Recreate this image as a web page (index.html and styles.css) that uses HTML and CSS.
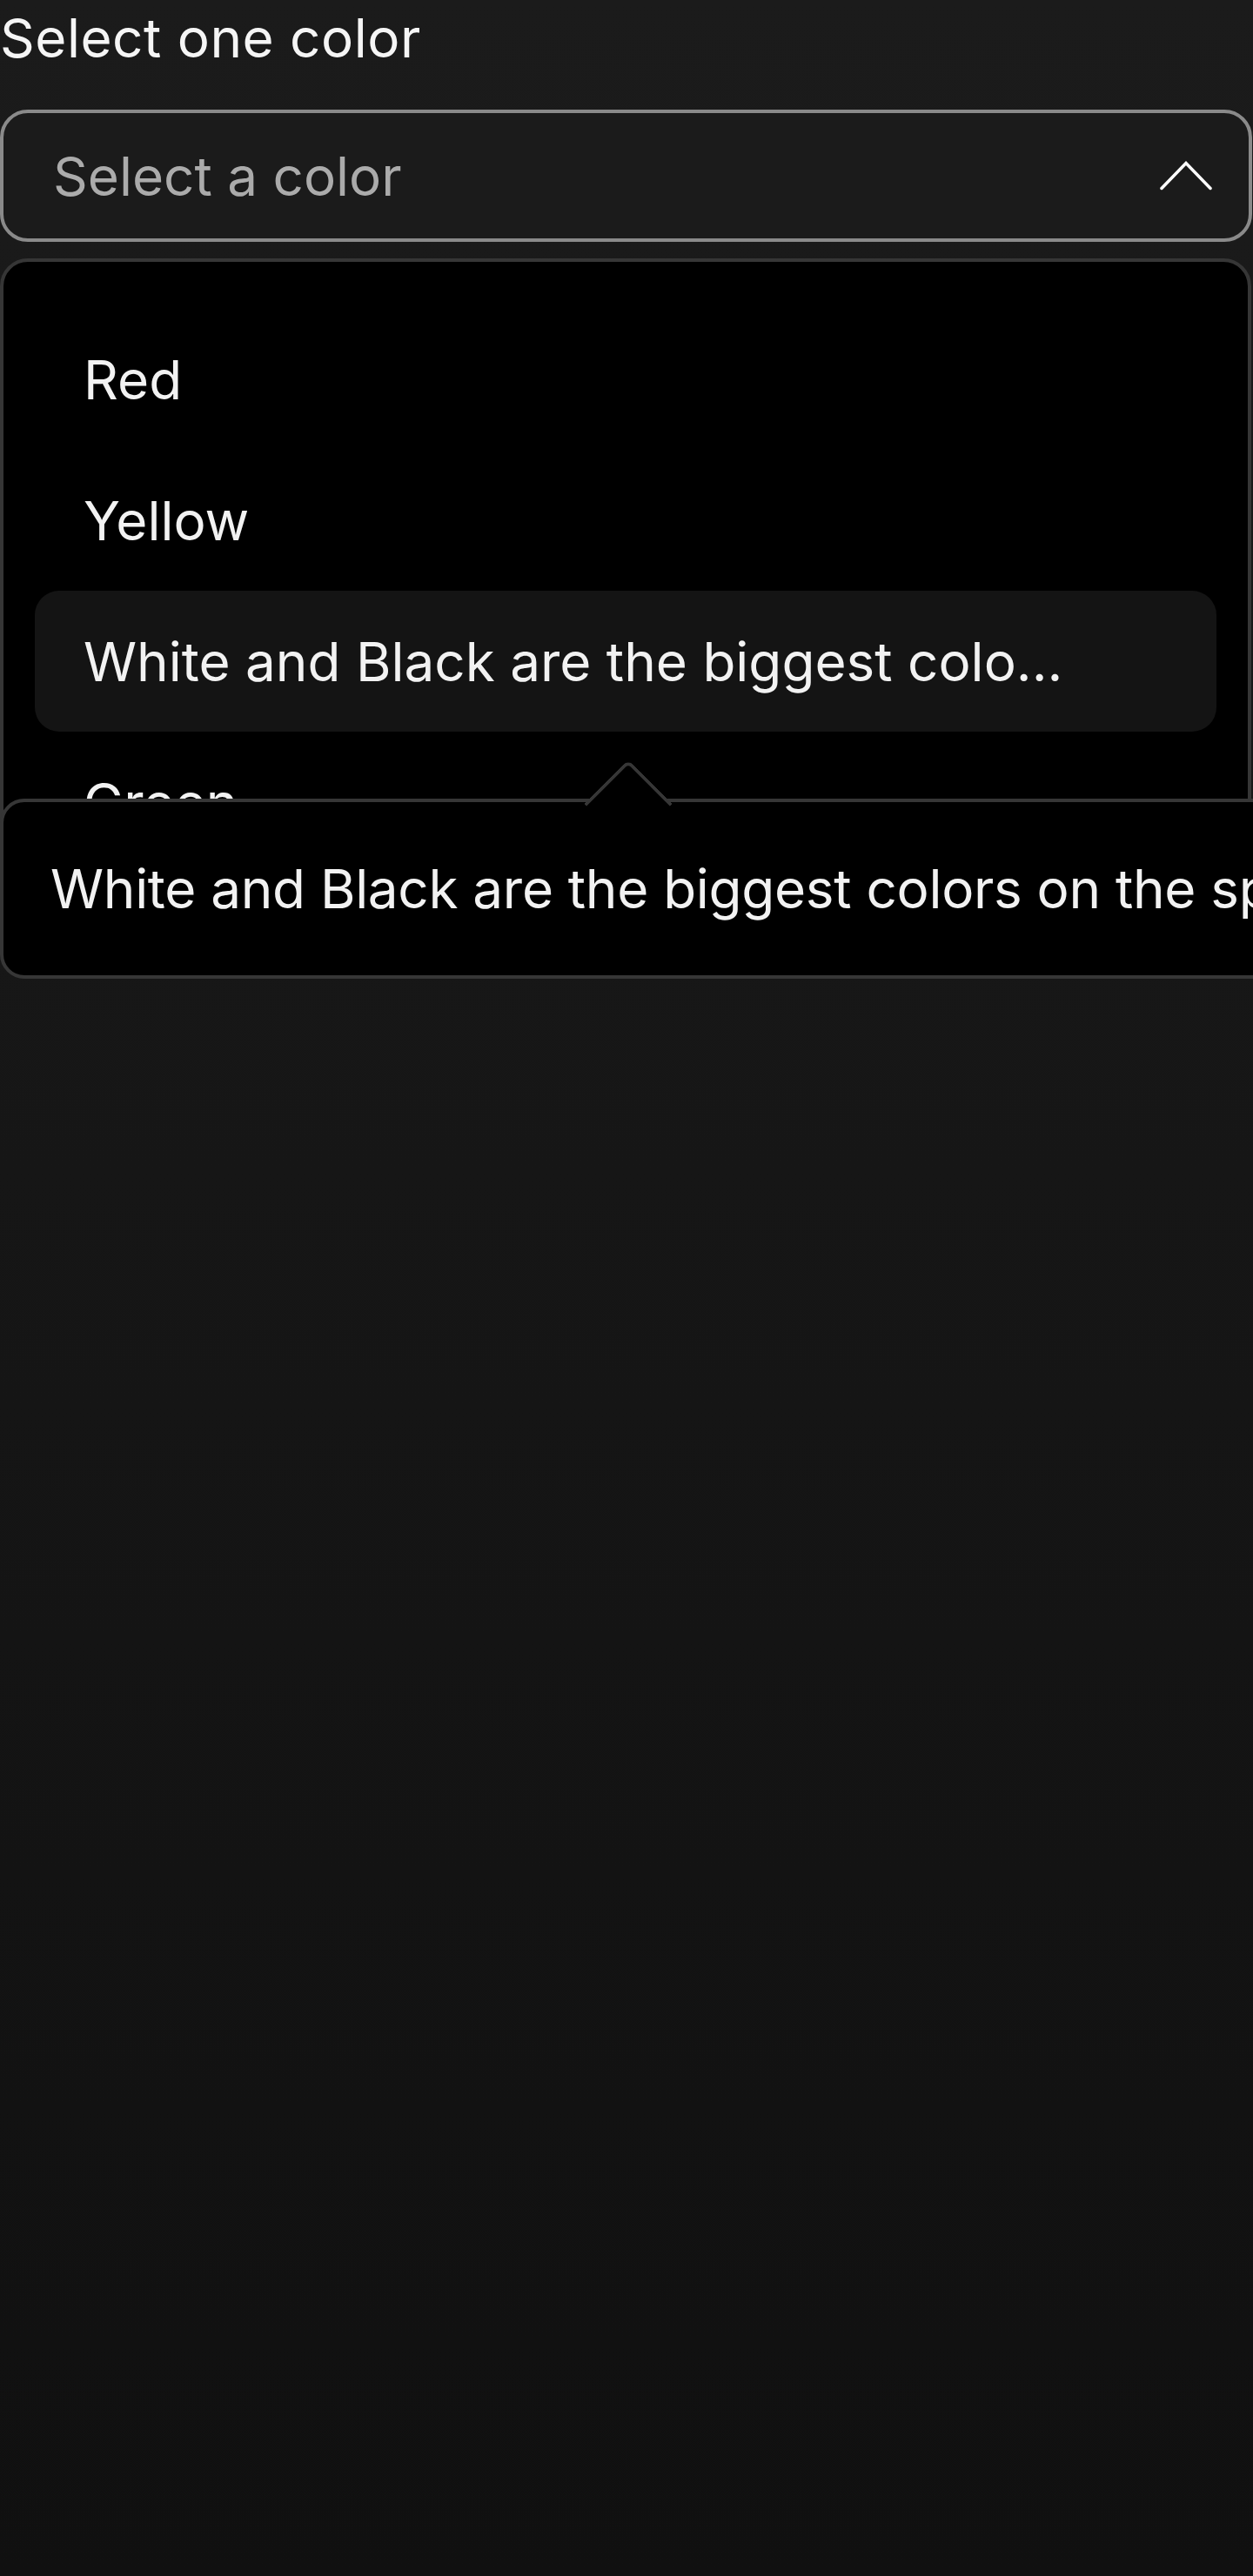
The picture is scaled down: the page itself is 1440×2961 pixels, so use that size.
FILE: index.html
```html
<!DOCTYPE html>
<html lang="en">
<head>
<meta charset="utf-8">
<title>Select one color</title>
<link rel="stylesheet" href="styles.css">
</head>
<body>
<div class="field">
  <label class="label">Select one color</label>
  <div class="select">
    <span class="placeholder">Select a color</span>
    <svg class="chevron" width="60" height="34" viewBox="0 0 60 34" aria-hidden="true">
      <polyline points="2,31.5 30,2.5 58,31.5" fill="none" stroke="#ffffff" stroke-width="3.5" stroke-linecap="round" stroke-linejoin="miter"/>
    </svg>
  </div>
  <ul class="list">
    <li class="item">Red</li>
    <li class="item">Yellow</li>
    <li class="item item-active">White and Black are the biggest colo...</li>
    <li class="item">Green</li>
    <li class="item">Blue</li>
  </ul>
  <div class="tooltip">White and Black are the biggest colors on the spectrum</div>
</div>
</body>
</html>
```

FILE: styles.css
```css
html, body {
  margin: 0;
  padding: 0;
  overflow-x: hidden;
}

body {
  min-height: 2961px;
  background: linear-gradient(#1b1b1b, #101010);
  font-family: Inter, "Noto Sans", "Liberation Sans", sans-serif;
  color: #f2f2f2;
}

.field {
  position: relative;
  display: flex;
  flex-direction: column;
}

.label {
  display: block;
  font-size: 62px;
  line-height: 88px;
  letter-spacing: 0.5px;
  color: #f5f5f5;
  margin-bottom: 38px;
}

.select {
  box-sizing: border-box;
  height: 152px;
  width: 1439px;
  display: flex;
  align-items: center;
  justify-content: space-between;
  border: 4px solid #8a8a8a;
  border-radius: 32px;
  padding: 0 42px 0 57px;
  background: #1b1b1b;
}

.placeholder {
  font-size: 62px;
  color: #ababab;
}

.chevron {
  display: block;
  flex: none;
}

.list {
  box-sizing: border-box;
  list-style: none;
  margin: 19px 0 0;
  width: 1438px;
  height: 800px;
  overflow: hidden;
  padding: 54px 36px;
  background: #000;
  border: 4px solid #363636;
  border-radius: 32px;
}

.item {
  box-sizing: border-box;
  height: 162px;
  display: flex;
  align-items: center;
  padding: 0 56px;
  border-radius: 28px;
  font-size: 62px;
  color: #f2f2f2;
  white-space: nowrap;
}

.item-active {
  background: #141414;
}

.tooltip {
  position: absolute;
  top: 918px;
  left: 0;
  box-sizing: border-box;
  height: 207px;
  display: flex;
  align-items: center;
  padding: 0 60px 0 54px;
  background: #000;
  border: 4px solid #363636;
  border-radius: 28px;
  font-size: 62px;
  letter-spacing: -0.3px;
  color: #f2f2f2;
  white-space: nowrap;
}

.tooltip::before {
  content: "";
  position: absolute;
  box-sizing: border-box;
  width: 72px;
  height: 72px;
  left: 682px;
  top: -34px;
  background: #000;
  border-top: 4px solid #363636;
  border-left: 4px solid #363636;
  border-top-left-radius: 8px;
  transform: rotate(45deg);
}
```
